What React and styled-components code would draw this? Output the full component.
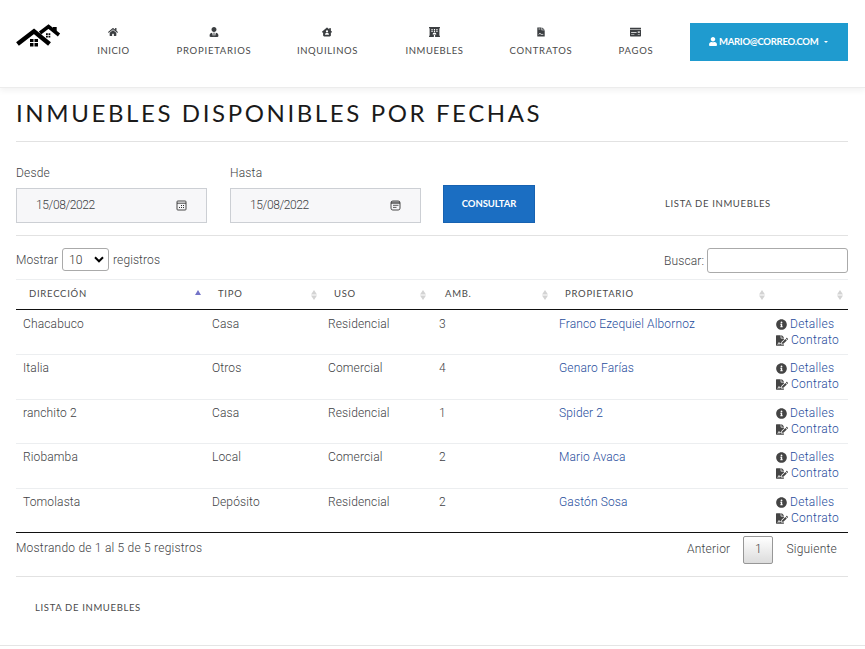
import React from "react";
import styled, { createGlobalStyle, css } from "styled-components";
import {
  FaHome,
  FaUserTie,
  FaHotel,
  FaMoneyCheck,
  FaUser,
  FaInfoCircle,
  FaFileSignature,
} from "react-icons/fa";
import { FaHouseChimneyUser } from "react-icons/fa6";

const Global = createGlobalStyle`
  * { box-sizing: border-box; }
  body {
    margin: 0;
    background: #fff;
    color: #3e4144;
    font: 300 12px/16px Roboto, "Liberation Sans", sans-serif;
    overflow: hidden;
  }
`;

const capsFont = css`
  font-family: Lato, "Open Sans", sans-serif;
  font-weight: 400;
  white-space: nowrap;
`;

const Page = styled.div`
  height: 649px;
  overflow: hidden;
`;

const Header = styled.header`
  display: grid;
  grid-template-columns: 16px 45px 104px 96px 132px 82px 131px 59px 25px 158px;
  height: 88px;
  border-bottom: 1px solid #ececec;
  box-shadow: 0 3px 6px rgba(0, 0, 0, 0.05);
`;

const Logo = styled.svg`
  grid-column: 2;
  width: 45px;
  height: 25px;
  margin-top: 23px;
`;

const Nav = styled.nav`
  grid-column: 3 / 9;
  display: flex;
  padding: 27px 0 0 36px;
`;

const NavItem = styled.a`
  ${capsFont}
  display: flex;
  flex-direction: column;
  align-items: center;
  flex: none;
  width: ${(p) => p.$width}px;
  margin-right: ${(p) => p.$gap}px;
  font-size: 9.5px;
  letter-spacing: ${(p) => p.$spacing}px;
  line-height: 14px;
  color: #4a4a4a;

  svg {
    width: ${(p) => p.$icon}px;
    height: 10px;
    margin: 0 1px 7px 0;
    color: #3b3e41;
  }
`;

const UserButton = styled.button`
  ${capsFont}
  grid-column: 10;
  display: flex;
  align-items: center;
  width: 158px;
  height: 38px;
  margin-top: 23px;
  padding: 0 0 1px 19px;
  border: 0;
  background: #1f9bcf;
  color: #fff;
  font-size: 9.5px;
  font-weight: 700;
  letter-spacing: -0.28px;

  svg {
    width: 8px;
    height: 9px;
    margin-right: 2px;
  }
`;

const Caret = styled.span`
  margin-left: 6px;
  border: 2.5px solid transparent;
  border-top-color: #fff;
  border-bottom: 0;
`;

const Main = styled.main`
  padding: 0 17px 0 16px;
`;

const Title = styled.h1`
  ${capsFont}
  margin: 0;
  height: 54px;
  padding-top: 9px;
  border-bottom: 1px solid #e2e2e2;
  color: #1a1a1a;
  font-size: 24px;
  line-height: 32px;
  letter-spacing: 2.61px;
`;

const Filters = styled.div`
  display: flex;
  height: 94px;
  padding-top: 23px;
  border-bottom: 1px solid #e2e2e2;
`;

const Field = styled.label`
  width: 191px;
  margin-right: ${(p) => p.$gap}px;
  letter-spacing: 0.2px;
`;

const DateBox = styled.div`
  display: flex;
  align-items: center;
  justify-content: space-between;
  height: 35px;
  margin-top: 7px;
  padding: 0 19px 1px 19px;
  border: 1px solid #cccfd4;
  background: #f7f7f9;
  letter-spacing: -0.4px;

  svg {
    width: 11px;
    height: 11px;
    margin-top: 1px;
    color: #333;
  }
`;

const Submit = styled.button`
  ${capsFont}
  width: 92px;
  height: 38px;
  margin-top: 20px;
  padding: 0 0 1px;
  border: 1px solid #1762b1;
  background: #1b6ec2;
  color: #fff;
  font-size: 9.5px;
  font-weight: 700;
  letter-spacing: -0.1px;
`;

const ListLink = styled.a`
  ${capsFont}
  display: block;
  margin: ${(p) => p.$margin};
  font-size: 9.5px;
  line-height: 14px;
  letter-spacing: 0.65px;
  color: #4a4a4a;
`;

const Controls = styled.div`
  display: flex;
  justify-content: space-between;
  height: 43px;
  padding-top: 12px;
  letter-spacing: 0.1px;
`;

const Group = styled.div`
  display: flex;
  align-items: center;
  gap: ${(p) => p.$gap}px;
  height: ${(p) => p.$height}px;
`;

const Select = styled.div`
  display: flex;
  align-items: center;
  justify-content: space-between;
  width: 47px;
  height: 23px;
  padding: 0 4px 0 6px;
  border: 1px solid #aaa;
  border-radius: 3px;
  color: #333;

  svg {
    width: 10px;
    height: 7px;
  }
`;

const Search = styled.input`
  width: 141px;
  height: 25px;
  padding: 0;
  border: 1px solid #aaa;
  border-radius: 3px;
`;

const Table = styled.div`
  border-bottom: 1px solid #111;
`;

const columnTracks = css`
  display: grid;
  grid-template-columns: 189px 116px 111px 120px 217px 79px;
`;

const HeadRow = styled.div`
  ${columnTracks}
  height: 31px;
  border-top: 1px solid #eceef0;
  border-bottom: 1px solid #111;
`;

const Row = styled.div`
  ${columnTracks}
  height: ${(p) => p.$height}px;

  & + & {
    border-top: 1px solid #eceef0;
  }

  &:nth-child(2) {
    padding-top: 1px;
  }
`;

const HeadCell = styled.div`
  ${capsFont}
  display: flex;
  align-items: center;
  justify-content: space-between;
  padding: 0 ${(p) => p.$right}px 2px 13px;
  font-size: 9.5px;
  letter-spacing: 0.74px;
  color: #4a4a4a;

  svg {
    width: 6px;
    height: 10px;
    margin-top: ${(p) => (p.$sorted ? 0 : 3)}px;
  }
`;

const Cell = styled.div`
  padding: 5px 0 0 7px;
  letter-spacing: 0.14px;
  white-space: nowrap;
  color: ${(p) => (p.$link ? "#1f4d9c" : "inherit")};
`;

const Action = styled.a`
  display: flex;
  align-items: center;
  gap: 3px;
  color: #1f4d9c;
  letter-spacing: 0.3px;

  svg {
    width: ${(p) => p.$icon}px;
    height: 11px;
    color: #444;
  }
`;

const Footer = styled.div`
  display: flex;
  justify-content: space-between;
  height: 44px;
  border-bottom: 1px solid #e2e2e2;
  letter-spacing: 0.22px;
`;

const Info = styled.span`
  padding-top: 7px;
`;

const Pager = styled.div`
  display: flex;
  height: 28px;
  margin: 3px 11px 0 0;
  gap: 13px;
  line-height: 26px;
`;

const PageNumber = styled.span`
  width: 30px;
  height: 28px;
  border: 1px solid #979797;
  border-radius: 2px;
  background: linear-gradient(#fff, #dcdcdc);
  line-height: 25px;
  text-align: center;
`;

const Bottom = styled.footer`
  height: 69px;
  border-bottom: 1px solid #e5e5e5;
  padding: 24px 0 0 35px;
`;

const HouseLogo = () => (
  <Logo viewBox="0 0 45 25" aria-hidden="true">
    <path d="M1.5 21 18 8.3 33.5 21" fill="none" stroke="#000" strokeWidth="4.5" />
    <path d="M24 10 32.5 3.5 43 12" fill="none" stroke="#000" strokeWidth="3.6" />
    <path d="M37 4h3.7v7L37 8z" />
    <path d="M14 16h3.5v3H14zM18.5 16H22v3h-3.5zM14 20h3.5v3.5H14zM18.5 20H22v3.5h-3.5z" />
    <path d="M30 10.3h1.8v1.8H30zM32.5 10.3h1.8v1.8h-1.8zM30 12.8h1.8v1.8H30zM32.5 12.8h1.8v1.8h-1.8z" />
  </Logo>
);

const ContractIcon = () => (
  <svg viewBox="0 0 8 10" aria-hidden="true">
    <path d="M.3.5h4.2v2.8h3.2v6.2H.3z" fill="currentColor" />
    <path d="M5.2.5 7.7 2.7H5.2z" fill="currentColor" />
    <path d="M1.5 2h1.8M1.8 7.6 3 6l.8 1.4h2.5" fill="none" stroke="#fff" strokeWidth=".7" />
  </svg>
);

const CardIcon = () => <FaMoneyCheck preserveAspectRatio="none" />;

const Calendar = ({ lines }) => (
  <svg viewBox="0 0 11 11" fill="none" stroke="currentColor" aria-hidden="true">
    <rect x="1" y="1" width="9" height="9" rx={lines ? 1.8 : 0.8} strokeWidth=".9" />
    <path d="M1 3.2h9" strokeWidth=".9" />
    {lines ? (
      <path d="M1 2.2h9M3 5.3h5.5M3 7.4h3.5" strokeWidth=".8" />
    ) : (
      <path d="M5 5.5h4M3 7.5h5" strokeDasharray="1 1" />
    )}
  </svg>
);

const Chevron = () => (
  <svg viewBox="0 0 10 7" fill="none" stroke="#000" strokeWidth="2" aria-hidden="true">
    <path d="m1 1.3 4 4 4-4" />
  </svg>
);

const Sort = ({ active }) => (
  <svg viewBox="0 0 6 10" aria-hidden="true">
    {active ? (
      <path d="M0 6h6L3 1z" fill="#7474c8" />
    ) : (
      <path d="M0 4.4h6L3 0zM0 5.6h6L3 10z" fill="#d3d3d3" />
    )}
  </svg>
);

const nav = [
  { label: "INICIO", Icon: FaHome, icon: 10, width: 33, gap: 46, spacing: 0.55 },
  { label: "PROPIETARIOS", Icon: FaUserTie, icon: 10, width: 76, gap: 45, spacing: 0.77 },
  { label: "INQUILINOS", Icon: FaHouseChimneyUser, icon: 10, width: 61, gap: 47, spacing: 0.65 },
  { label: "INMUEBLES", Icon: FaHotel, icon: 11, width: 59, gap: 45, spacing: 0.57 },
  { label: "CONTRATOS", Icon: ContractIcon, icon: 8, width: 64, gap: 45, spacing: 0.72 },
  { label: "PAGOS", Icon: CardIcon, icon: 11, width: 36, gap: 0, spacing: 0.75 },
];

const columns = [
  ["DIRECCIÓN", 4],
  ["TIPO", 4],
  ["USO", 6],
  ["AMB.", 4],
  ["PROPIETARIO", 4],
  ["", 5],
];

const rows = [
  ["Chacabuco", "Casa", "Residencial", "3", "Franco Ezequiel Albornoz"],
  ["Italia", "Otros", "Comercial", "4", "Genaro Farías"],
  ["ranchito 2", "Casa", "Residencial", "1", "Spider 2"],
  ["Riobamba", "Local", "Comercial", "2", "Mario Avaca"],
  ["Tomolasta", "Depósito", "Residencial", "2", "Gastón Sosa"],
];

export default function App() {
  return (
    <Page>
      <Global />
      <Header>
        <HouseLogo />
        <Nav>
          {nav.map(({ label, Icon, icon, width, gap, spacing }) => (
            <NavItem key={label} $icon={icon} $width={width} $gap={gap} $spacing={spacing}>
              <Icon />
              {label}
            </NavItem>
          ))}
        </Nav>
        <UserButton>
          <FaUser />
          MARIO@CORREO.COM
          <Caret />
        </UserButton>
      </Header>
      <Main>
        <Title>INMUEBLES DISPONIBLES POR FECHAS</Title>
        <Filters>
          <Field $gap={23}>
            Desde
            <DateBox>15/08/2022<Calendar /></DateBox>
          </Field>
          <Field $gap={22}>
            Hasta
            <DateBox>15/08/2022<Calendar lines /></DateBox>
          </Field>
          <Submit>CONSULTAR</Submit>
          <ListLink $margin="32px 0 0 130px">LISTA DE INMUEBLES</ListLink>
        </Filters>
        <Controls>
          <Group $gap={4} $height={23}>
            Mostrar
            <Select>10<Chevron /></Select>
            registros
          </Group>
          <Group $gap={3} $height={25}>
            Buscar:
            <Search />
          </Group>
        </Controls>
        <Table>
          <HeadRow>
            {columns.map(([label, right], i) => (
              <HeadCell key={i} $right={right} $sorted={i === 0}>
                <span>{label}</span>
                <Sort active={i === 0} />
              </HeadCell>
            ))}
          </HeadRow>
          {rows.map((row, index) => (
            <Row key={row[0]} $height={index % 2 ? 45 : 44}>
              {row.map((value, i) => (
                <Cell key={i} $link={i === 4}>{value}</Cell>
              ))}
              <Cell>
                <Action $icon={11}><FaInfoCircle />Detalles</Action>
                <Action $icon={12}><FaFileSignature />Contrato</Action>
              </Cell>
            </Row>
          ))}
        </Table>
        <Footer>
          <Info>Mostrando de 1 al 5 de 5 registros</Info>
          <Pager>
            <span>Anterior</span>
            <PageNumber>1</PageNumber>
            <span>Siguiente</span>
          </Pager>
        </Footer>
      </Main>
      <Bottom>
        <ListLink $margin="0">LISTA DE INMUEBLES</ListLink>
      </Bottom>
    </Page>
  );
}
